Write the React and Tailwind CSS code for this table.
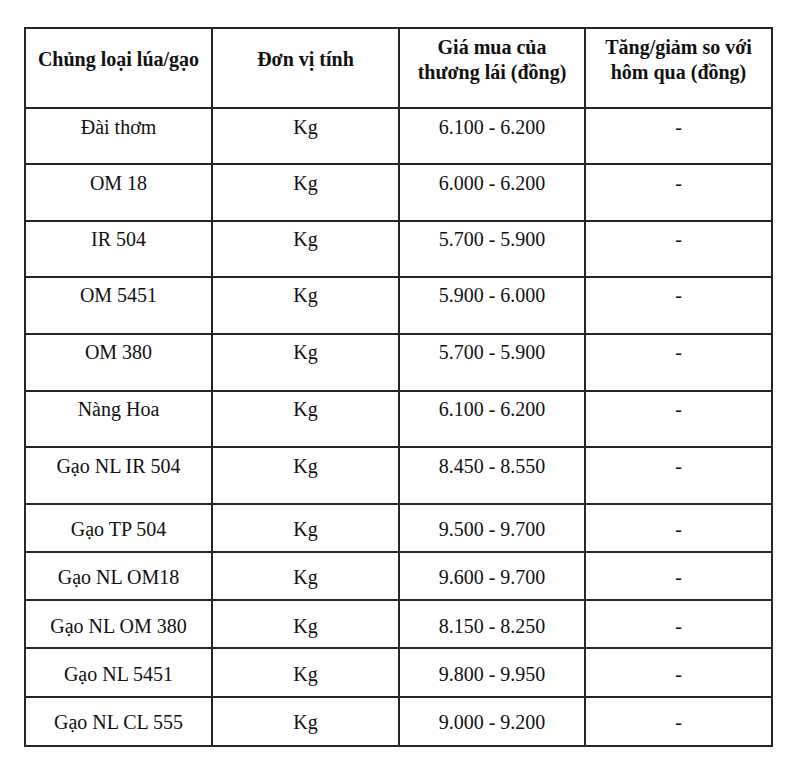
import React from "react";

const rows = [
  ["Đài thơm", "6.100 - 6.200", "h-[56px]", "pt-[6px]"],
  ["OM 18", "6.000 - 6.200", "h-[57px]", "pt-[6px]"],
  ["IR 504", "5.700 - 5.900", "h-[56px]", "pt-[5px]"],
  ["OM 5451", "5.900 - 6.000", "h-[57px]", "pt-[5px]"],
  ["OM 380", "5.700 - 5.900", "h-[57px]", "pt-[5px]"],
  ["Nàng Hoa", "6.100 - 6.200", "h-[56px]", "pt-[5px]"],
  ["Gạo NL IR 504", "8.450 - 8.550", "h-[57px]", "pt-[6px]"],
  ["Gạo TP 504", "9.500 - 9.700", "h-[48px]", "pt-[12px]"],
  ["Gạo NL OM18", "9.600 - 9.700", "h-[48px]", "pt-[12px]"],
  ["Gạo NL OM 380", "8.150 - 8.250", "h-[48px]", "pt-[13px]"],
  ["Gạo NL 5451", "9.800 - 9.950", "h-[49px]", "pt-[13px]"],
  ["Gạo NL CL 555", "9.000 - 9.200", "h-[47px]", "pt-[12px]"],
];

export default function App() {
  return (
    <div
      className="w-[800px] h-[765px] bg-white pt-[27px] pl-[24px] text-[#111] text-[20px] leading-[25px]"
      style={{ fontFamily: '"Liberation Serif", "Times New Roman", serif' }}
    >
      <div className="w-[749px] border-2 border-[#262626] flex flex-col">
        <div className="grid grid-cols-[187px_187px_186px_1fr] h-[80px] border-b-2 border-[#262626] font-bold">
          <div className="border-r-2 border-[#262626] flex items-center justify-center text-center pb-[17px]">
            Chủng loại lúa/gạo
          </div>
          <div className="border-r-2 border-[#262626] flex items-center justify-center text-center pb-[17px]">
            Đơn vị tính
          </div>
          <div className="border-r-2 border-[#262626] flex items-center justify-center text-center pb-[17px]">
            <span>
              Giá mua của
              <br />
              thương lái (đồng)
            </span>
          </div>
          <div className="flex items-center justify-center text-center pb-[17px]">
            <span>
              Tăng/giảm so với
              <br />
              hôm qua (đồng)
            </span>
          </div>
        </div>
        {rows.map(([name, price, h, pt], i) => (
          <div
            key={i}
            className={`grid grid-cols-[187px_187px_186px_1fr] ${h} ${
              i < rows.length - 1 ? "border-b-2 border-[#262626]" : ""
            }`}
          >
            <div className={`border-r-2 border-[#262626] text-center ${pt}`}>{name}</div>
            <div className={`border-r-2 border-[#262626] text-center ${pt}`}>Kg</div>
            <div className={`border-r-2 border-[#262626] text-center ${pt}`}>{price}</div>
            <div className={`text-center ${pt}`}>-</div>
          </div>
        ))}
      </div>
    </div>
  );
}
